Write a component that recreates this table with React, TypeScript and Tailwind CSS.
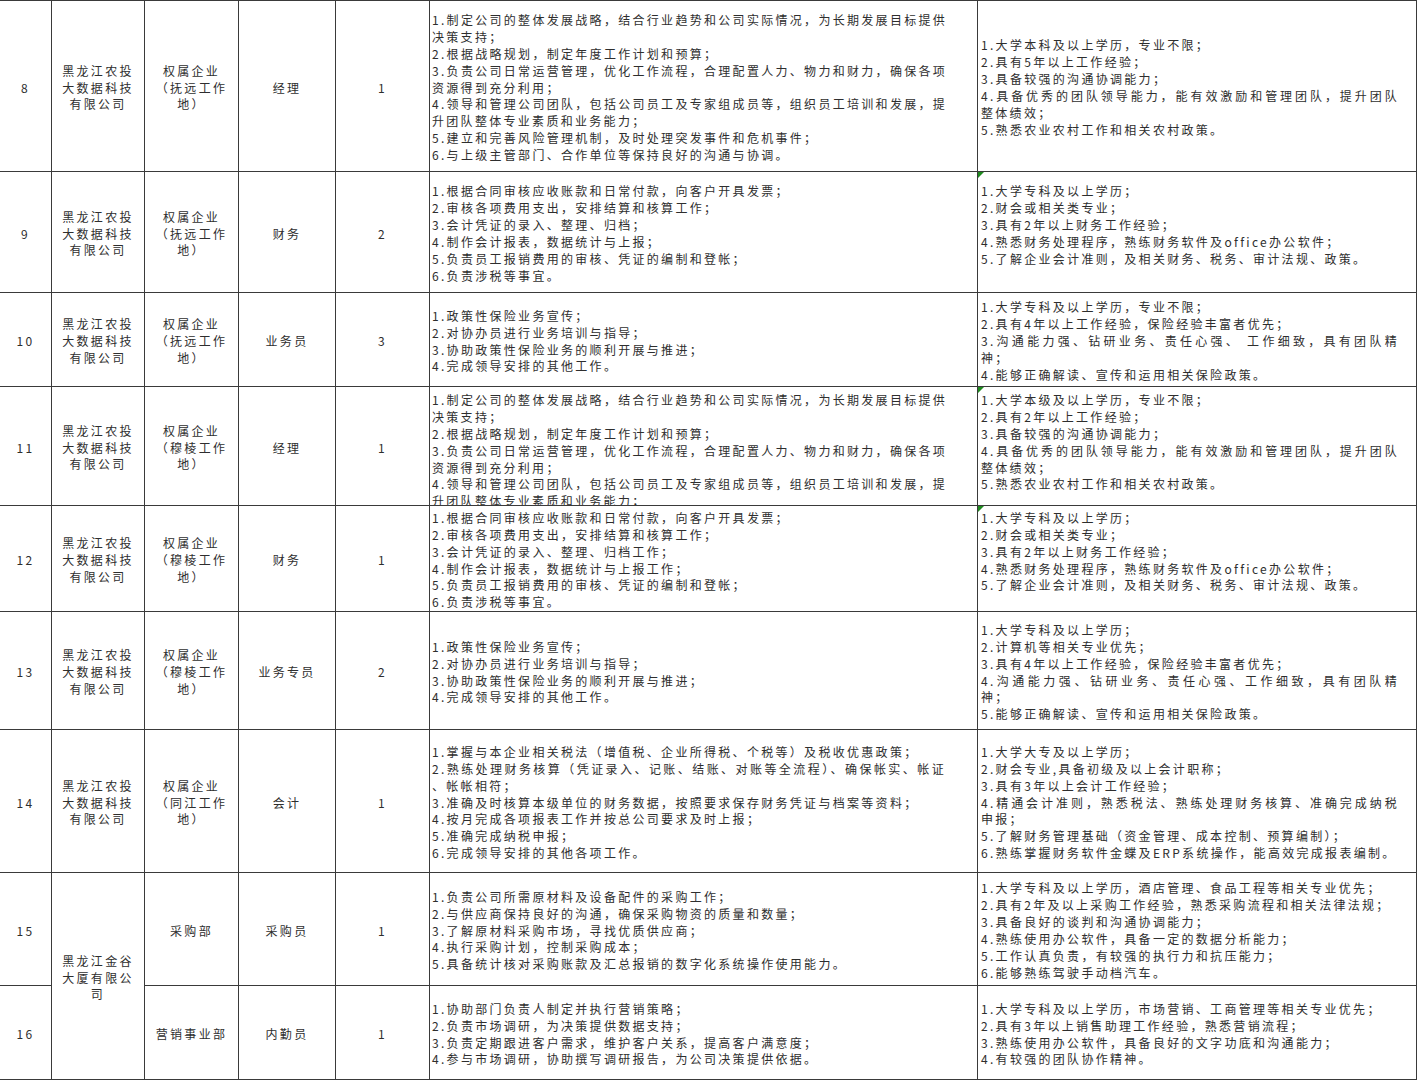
import React from 'react'

type Line = { t: string; j?: boolean }

const L = (t: string): Line => ({ t })
const J = (t: string): Line => ({ t, j: true })

interface Row {
  no: string
  company?: string[]
  companySpan?: boolean
  dept: string[]
  pos: string
  count: string
  duties: Line[]
  reqs: Line[]
  top?: boolean
  flag?: boolean
}

const managerDuties: Line[] = [
  J('1.制定公司的整体发展战略，结合行业趋势和公司实际情况，为长期发展目标提供'),
  L('决策支持；'),
  L('2.根据战略规划，制定年度工作计划和预算；'),
  J('3.负责公司日常运营管理，优化工作流程，合理配置人力、物力和财力，确保各项'),
  L('资源得到充分利用；'),
  J('4.领导和管理公司团队，包括公司员工及专家组成员等，组织员工培训和发展，提'),
  L('升团队整体专业素质和业务能力；'),
  L('5.建立和完善风险管理机制，及时处理突发事件和危机事件；'),
  L('6.与上级主管部门、合作单位等保持良好的沟通与协调。'),
]

const financeReqs: Line[] = [
  L('1.大学专科及以上学历；'),
  L('2.财会或相关类专业；'),
  L('3.具有2年以上财务工作经验；'),
  L('4.熟悉财务处理程序，熟练财务软件及office办公软件；'),
  L('5.了解企业会计准则，及相关财务、税务、审计法规、政策。'),
  L(''),
]

const salesDuties: Line[] = [
  L('1.政策性保险业务宣传；'),
  L('2.对协办员进行业务培训与指导；'),
  L('3.协助政策性保险业务的顺利开展与推进；'),
  L('4.完成领导安排的其他工作。'),
]

const nongtou = ['黑龙江农投', '大数据科技', '有限公司']
const fuyuan = ['权属企业', '（抚远工作', '地）']
const muling = ['权属企业', '（穆棱工作', '地）']

const rows: Row[] = [
  {
    no: '8', company: nongtou, dept: fuyuan, pos: '经理', count: '1',
    duties: managerDuties,
    reqs: [
      L('1.大学本科及以上学历，专业不限；'),
      L('2.具有5年以上工作经验；'),
      L('3.具备较强的沟通协调能力；'),
      J('4.具备优秀的团队领导能力，能有效激励和管理团队，提升团队'),
      L('整体绩效；'),
      L('5.熟悉农业农村工作和相关农村政策。'),
    ],
  },
  {
    no: '9', company: nongtou, dept: fuyuan, pos: '财务', count: '2', flag: true,
    duties: [
      L('1.根据合同审核应收账款和日常付款，向客户开具发票；'),
      L('2.审核各项费用支出，安排结算和核算工作；'),
      L('3.会计凭证的录入、整理、归档；'),
      L('4.制作会计报表，数据统计与上报；'),
      L('5.负责员工报销费用的审核、凭证的编制和登帐；'),
      L('6.负责涉税等事宜。'),
    ],
    reqs: financeReqs,
  },
  {
    no: '10', company: nongtou, dept: fuyuan, pos: '业务员', count: '3',
    duties: salesDuties,
    reqs: [
      L('1.大学专科及以上学历，专业不限；'),
      L('2.具有4年以上工作经验，保险经验丰富者优先；'),
      J('3.沟通能力强、钻研业务、责任心强、 工作细致，具有团队精'),
      L('神；'),
      L('4.能够正确解读、宣传和运用相关保险政策。'),
    ],
  },
  {
    no: '11', company: nongtou, dept: muling, pos: '经理', count: '1', top: true, flag: true,
    duties: managerDuties,
    reqs: [
      L('1.大学本级及以上学历，专业不限；'),
      L('2.具有2年以上工作经验；'),
      L('3.具备较强的沟通协调能力；'),
      J('4.具备优秀的团队领导能力，能有效激励和管理团队，提升团队'),
      L('整体绩效；'),
      L('5.熟悉农业农村工作和相关农村政策。'),
    ],
  },
  {
    no: '12', company: nongtou, dept: muling, pos: '财务', count: '1', flag: true,
    duties: [
      L('1.根据合同审核应收账款和日常付款，向客户开具发票；'),
      L('2.审核各项费用支出，安排结算和核算工作；'),
      L('3.会计凭证的录入、整理、归档工作；'),
      L('4.制作会计报表，数据统计与上报工作；'),
      L('5.负责员工报销费用的审核、凭证的编制和登帐；'),
      L('6.负责涉税等事宜。'),
    ],
    reqs: financeReqs,
  },
  {
    no: '13', company: nongtou, dept: muling, pos: '业务专员', count: '2',
    duties: salesDuties,
    reqs: [
      L('1.大学专科及以上学历；'),
      L('2.计算机等相关专业优先；'),
      L('3.具有4年以上工作经验，保险经验丰富者优先；'),
      J('4.沟通能力强、钻研业务、责任心强、工作细致，具有团队精'),
      L('神；'),
      L('5.能够正确解读、宣传和运用相关保险政策。'),
    ],
  },
  {
    no: '14', company: nongtou, dept: ['权属企业', '（同江工作', '地）'], pos: '会计', count: '1',
    duties: [
      L('1.掌握与本企业相关税法（增值税、企业所得税、个税等）及税收优惠政策；'),
      J('2.熟练处理财务核算（凭证录入、记账、结账、对账等全流程）、确保帐实、帐证'),
      L('、帐帐相符；'),
      L('3.准确及时核算本级单位的财务数据，按照要求保存财务凭证与档案等资料；'),
      L('4.按月完成各项报表工作并按总公司要求及时上报；'),
      L('5.准确完成纳税申报；'),
      L('6.完成领导安排的其他各项工作。'),
    ],
    reqs: [
      L('1.大学大专及以上学历；'),
      L('2.财会专业,具备初级及以上会计职称；'),
      L('3.具有3年以上会计工作经验；'),
      J('4.精通会计准则，熟悉税法、熟练处理财务核算、准确完成纳税'),
      L('申报；'),
      L('5.了解财务管理基础（资金管理、成本控制、预算编制）；'),
      L('6.熟练掌握财务软件金蝶及ERP系统操作，能高效完成报表编制。'),
    ],
  },
  {
    no: '15', company: ['黑龙江金谷', '大厦有限公', '司'], companySpan: true, dept: ['采购部'], pos: '采购员', count: '1',
    duties: [
      L('1.负责公司所需原材料及设备配件的采购工作；'),
      L('2.与供应商保持良好的沟通，确保采购物资的质量和数量；'),
      L('3.了解原材料采购市场，寻找优质供应商；'),
      L('4.执行采购计划，控制采购成本；'),
      L('5.具备统计核对采购账款及汇总报销的数字化系统操作使用能力。'),
    ],
    reqs: [
      L('1.大学专科及以上学历，酒店管理、食品工程等相关专业优先；'),
      L('2.具有2年及以上采购工作经验，熟悉采购流程和相关法律法规；'),
      L('3.具备良好的谈判和沟通协调能力；'),
      L('4.熟练使用办公软件，具备一定的数据分析能力；'),
      L('5.工作认真负责，有较强的执行力和抗压能力；'),
      L('6.能够熟练驾驶手动档汽车。'),
    ],
  },
  {
    no: '16', dept: ['营销事业部'], pos: '内勤员', count: '1',
    duties: [
      L('1.协助部门负责人制定并执行营销策略；'),
      L('2.负责市场调研，为决策提供数据支持；'),
      L('3.负责定期跟进客户需求，维护客户关系，提高客户满意度；'),
      L('4.参与市场调研，协助撰写调研报告，为公司决策提供依据。'),
    ],
    reqs: [
      L('1.大学专科及以上学历，市场营销、工商管理等相关专业优先；'),
      L('2.具有3年以上销售助理工作经验，熟悉营销流程；'),
      L('3.熟练使用办公软件，具备良好的文字功底和沟通能力；'),
      L('4.有较强的团队协作精神。'),
    ],
  },
]

const cell = 'border-r border-b border-[#3a3a3a] overflow-hidden'

function CenterCell({ lines, span }: { lines: string[]; span?: boolean }) {
  return (
    <div className={`${cell} flex flex-col items-center justify-center pt-[4px] text-center ${span ? 'row-span-2' : ''}`}>
      {lines.map((l, i) => (
        <div key={i} className="whitespace-nowrap">{l}</div>
      ))}
    </div>
  )
}

function TextCell({ lines, width, top, flag, pad }: {
  lines: Line[]; width: string; top?: boolean; flag?: boolean; pad: string
}) {
  return (
    <div className={`${cell} relative flex flex-col ${top ? 'justify-start pt-[5px]' : 'justify-center pt-[4px]'} ${pad}`}>
      {flag && (
        <div className="absolute left-0 top-0 h-0 w-0 border-t-[6px] border-r-[6px] border-t-[#1f8a1f] border-r-transparent" />
      )}
      <div className={width}>
        {lines.map((l, i) => (
          <div
            key={i}
            className={`h-[16.9px] whitespace-nowrap ${l.j ? 'text-justify [text-align-last:justify]' : ''}`}
          >
            {l.t || '\u00a0'}
          </div>
        ))}
      </div>
    </div>
  )
}

export default function App() {
  return (
    <div className="h-[1080px] w-[1417px] overflow-hidden bg-white font-['Noto_Sans_CJK_SC',sans-serif] text-[12px] leading-[16.9px] tracking-[2.3px] text-[#2e2e2e]">
      <div className="grid grid-cols-[52px_93px_94px_97px_94px_548px_439px] grid-rows-[171px_121px_94px_119px_106px_118px_143px_113px_94px] border-t border-[#3a3a3a]">
        {rows.map((r) => (
          <React.Fragment key={r.no}>
            <CenterCell lines={[r.no]} />
            {r.company && <CenterCell lines={r.company} span={r.companySpan} />}
            <CenterCell lines={r.dept} />
            <CenterCell lines={[r.pos]} />
            <CenterCell lines={[r.count]} />
            <TextCell lines={r.duties} width="w-[514px]" top={r.top} pad="pl-[2px]" />
            <TextCell lines={r.reqs} width="w-[418px]" top={r.top} flag={r.flag} pad="pl-[3px]" />
          </React.Fragment>
        ))}
      </div>
    </div>
  )
}
